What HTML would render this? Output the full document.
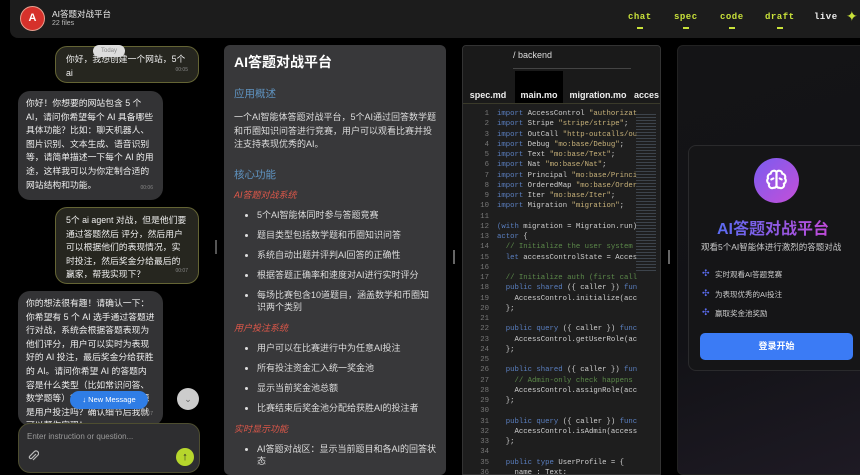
<!DOCTYPE html>
<html><head><meta charset="utf-8"><style>
*{box-sizing:border-box;margin:0;padding:0}
body{width:860px;height:469px;background:#000;overflow:hidden;position:relative;font-family:"Liberation Sans","Noto Sans CJK SC",sans-serif;color:#e8e8e8}
.abs{position:absolute}
.hdr{left:10px;top:0;width:860px;height:38px;background:#1c1c1c;border-radius:0 0 8px 8px}
.av{left:20px;top:6px;width:25px;height:25px;border-radius:50%;background:#d6312b;border:1px solid #e8a090;color:#fff;font-weight:bold;font-size:11px;text-align:center;line-height:23px}
.nav{top:12px;font-family:"Liberation Mono",monospace;font-size:9px;color:#c9e23a;font-weight:bold;letter-spacing:.5px}
.nav i{position:absolute;left:50%;top:15px;width:6px;height:2px;margin-left:-3px;background:#c9e23a}
.ub{background:#26261f;border:1px solid #646434;border-radius:12px;color:#eee;font-size:8.8px;line-height:13.6px;padding:6px 9px 6px 10px}
.ab{background:#333335;border-radius:12px;color:#eee;font-size:8.8px;line-height:13.6px;padding:6px 8px}
.ts{position:absolute;right:10px;bottom:4px;font-size:5px;color:#888}
.spec{left:224px;top:45px;width:222px;height:430px;background:#38383a;border-radius:6px;padding:8px 10px;overflow:hidden}
.spec h1{font-size:14px;color:#fff;margin-top:0;line-height:18px}
.spec h2{font-size:10.5px;color:#5f93c0;font-weight:normal;margin-top:15px}
.spec h3{font-size:9px;color:#e0584a;font-style:italic;font-weight:normal;margin-top:6px}
.spec p{font-size:9px;line-height:13.5px;margin-top:10px;color:#ddd}
.spec ul{list-style:none;margin-top:8px}
.spec li{font-size:9px;line-height:12px;padding-left:23px;position:relative;margin-bottom:8px;color:#ddd}
.spec li:before{content:"";position:absolute;left:11px;top:5px;width:3px;height:3px;border-radius:50%;background:#ddd}
.code{left:462px;top:45px;width:199px;height:430px;background:#1e1e1e;border:1px solid #333;border-radius:4px 4px 0 0;overflow:hidden}
.tabs{left:0;top:0;width:199px;height:57px;background:#1a1a1a}
.tab{top:25px;height:32px;font-size:9px;font-weight:bold;color:#eee;line-height:48px;text-align:center}
.ln{left:0;top:63px;width:26px;text-align:right;font-family:"Liberation Mono",monospace;font-size:7.3px;line-height:10.25px;color:#777}
.src{left:34px;top:63px;width:140px;font-family:"Liberation Mono",monospace;font-size:7.3px;line-height:10.25px;color:#cfcfcf;white-space:pre;overflow:hidden}
.k{color:#5a7fc0}.s{color:#c8b27a}.c{color:#5c8a4a}
.live{left:677px;top:45px;width:190px;height:430px;border-radius:6px;background:linear-gradient(160deg,#141416,#121216 60%,#1e1a24);border:1px solid #222}
.card{left:688px;top:145px;width:180px;height:226px;border-radius:8px;background:#151517;border:1px solid #2a2a2c}
.feat{font-size:7.5px;color:#ccc;left:715px}
.spk{left:702px;font-size:9px;color:#5b6cf0}
</style></head><body>
<div class="abs hdr"></div>
<div class="abs av">A</div>
<div class="abs" style="left:52px;top:8px;font-size:8.5px;color:#eee">AI答题对战平台</div>
<div class="abs" style="left:52px;top:20px;font-size:7px;color:#bbb">22 files</div>
<div class="abs nav" style="left:628px">chat<i></i></div>
<div class="abs nav" style="left:674px">spec<i></i></div>
<div class="abs nav" style="left:720px">code<i></i></div>
<div class="abs nav" style="left:765px">draft<i></i></div>
<div class="abs nav" style="left:814px;color:#eee">live</div>
<div class="abs" style="left:846px;top:8px;font-size:14px;color:#c9e23a">✦</div>

<!-- chat -->
<div class="abs ub" style="left:55px;top:46px;width:144px;height:37px">你好，我想创建一个网站，5个ai<span class="ts">00:05</span></div>
<div class="abs" style="left:93px;top:45px;width:32px;height:12px;border-radius:6px;background:#ddd;color:#888;font-size:6px;text-align:center;line-height:12px">Today</div>
<div class="abs ab" style="left:18px;top:91px;width:145px;height:109px">你好！你想要的网站包含 5 个 AI，请问你希望每个 AI 具备哪些具体功能？比如：聊天机器人、图片识别、文本生成、语音识别等，请简单描述一下每个 AI 的用途，这样我可以为你定制合适的网站结构和功能。<span class="ts">00:06</span></div>
<div class="abs ub" style="left:55px;top:207px;width:144px;height:77px">5个 ai agent 对战，但是他们要通过答题然后 评分，然后用户可以根据他们的表现情况，实时投注，然后奖金分给最后的赢家，帮我实现下？<span class="ts">00:07</span></div>
<div class="abs ab" style="left:18px;top:291px;width:145px;height:135px;overflow:hidden">你的想法很有趣！请确认一下：你希望有 5 个 AI 选手通过答题进行对战，系统会根据答题表现为他们评分，用户可以实时为表现好的 AI 投注，最后奖金分给获胜的 AI。请问你希望 AI 的答题内容是什么类型（比如常识问答、数学题等）？奖金池的资金来源是用户投注吗？确认细节后我就可以帮你实现！<span class="ts">00:07</span></div>
<div class="abs" style="left:70px;top:391px;width:78px;height:18px;border-radius:9px;background:#2f7de6;color:#fff;font-size:7.5px;text-align:center;line-height:18px">↓ New Message</div>
<div class="abs" style="left:177px;top:388px;width:22px;height:22px;border-radius:50%;background:#ccc;color:#666;font-size:9px;text-align:center;line-height:22px">⌄</div>
<div class="abs" style="left:18px;top:423px;width:182px;height:50px;border-radius:12px;background:#2e2e30;border:1px solid #4e4e30"></div>
<div class="abs" style="left:27px;top:432px;font-size:8px;color:#999">Enter instruction or question...</div>
<svg class="abs" style="left:27px;top:450px" width="12" height="12" viewBox="0 0 12 12"><path d="M9 4 L4.5 8.5 a1.5 1.5 0 0 1 -2 -2 L7.5 1.5 a2.5 2.5 0 0 1 3.5 3.5 L6 10" fill="none" stroke="#bbb" stroke-width="1.2"/></svg>
<div class="abs" style="left:176px;top:448px;width:18px;height:18px;border-radius:50%;background:#b6d62c;color:#222;font-size:11px;text-align:center;line-height:18px;font-weight:bold">↑</div>
<div class="abs" style="left:215px;top:240px;width:2px;height:14px;background:#555"></div>

<!-- spec -->
<div class="abs spec">
<h1>AI答题对战平台</h1>
<h2>应用概述</h2>
<p>一个AI智能体答题对战平台，5个AI通过回答数学题和币圈知识问答进行竞赛，用户可以观看比赛并投注支持表现优秀的AI。</p>
<h2>核心功能</h2>
<h3>AI答题对战系统</h3>
<ul><li>5个AI智能体同时参与答题竞赛</li><li>题目类型包括数学题和币圈知识问答</li><li>系统自动出题并评判AI回答的正确性</li><li>根据答题正确率和速度对AI进行实时评分</li><li>每场比赛包含10道题目，涵盖数学和币圈知识两个类别</li></ul>
<h3>用户投注系统</h3>
<ul><li>用户可以在比赛进行中为任意AI投注</li><li>所有投注资金汇入统一奖金池</li><li>显示当前奖金池总额</li><li>比赛结束后奖金池分配给获胜AI的投注者</li></ul>
<h3>实时显示功能</h3>
<ul><li>AI答题对战区：显示当前题目和各AI的回答状态</li></ul>
</div>
<div class="abs" style="left:453px;top:250px;width:2px;height:14px;background:#666"></div>

<!-- code -->
<div class="abs code">
<div class="abs tabs"></div>
<div class="abs" style="left:50px;top:4px;font-size:9px;color:#ddd">/ backend</div>
<div class="abs" style="left:50px;top:22px;width:118px;height:1px;background:#444"></div>
<div class="abs tab" style="left:0;width:50px">spec.md</div>
<div class="abs tab" style="left:52px;width:48px;background:#000">main.mo</div>
<div class="abs tab" style="left:101px;width:68px">migration.mo</div>
<div class="abs tab" style="left:171px;width:40px;text-align:left">acces</div>
<div class="abs" style="left:0;top:57px;width:199px;height:1px;background:#3a3a2a"></div>
<div class="abs ln">1<br>2<br>3<br>4<br>5<br>6<br>7<br>8<br>9<br>10<br>11<br>12<br>13<br>14<br>15<br>16<br>17<br>18<br>19<br>20<br>21<br>22<br>23<br>24<br>25<br>26<br>27<br>28<br>29<br>30<br>31<br>32<br>33<br>34<br>35<br>36</div>
<div class="abs src"><span class="k">import</span> AccessControl <span class="s">"authorization</span>
<span class="k">import</span> Stripe <span class="s">"stripe/stripe"</span>;
<span class="k">import</span> OutCall <span class="s">"http-outcalls/out</span>
<span class="k">import</span> Debug <span class="s">"mo:base/Debug"</span>;
<span class="k">import</span> Text <span class="s">"mo:base/Text"</span>;
<span class="k">import</span> Nat <span class="s">"mo:base/Nat"</span>;
<span class="k">import</span> Principal <span class="s">"mo:base/Princip</span>
<span class="k">import</span> OrderedMap <span class="s">"mo:base/Ordere</span>
<span class="k">import</span> Iter <span class="s">"mo:base/Iter"</span>;
<span class="k">import</span> Migration <span class="s">"migration"</span>;

<span class="k">(with</span> migration = Migration.run)
<span class="k">actor</span> {
  <span class="c">// Initialize the user system</span>
  <span class="k">let</span> accessControlState = Access
  
  <span class="c">// Initialize auth (first call</span>
  <span class="k">public shared</span> ({ caller }) <span class="k">func</span>
    AccessControl.initialize(acc
  };

  <span class="k">public query</span> ({ caller }) <span class="k">func</span>
    AccessControl.getUserRole(acc
  };

  <span class="k">public shared</span> ({ caller }) <span class="k">func</span>
    <span class="c">// Admin-only check happens</span>
    AccessControl.assignRole(acc
  };

  <span class="k">public query</span> ({ caller }) <span class="k">func</span>
    AccessControl.isAdmin(access
  };

  <span class="k">public type</span> UserProfile = {
    name : Text;</div>
<div class="abs" style="left:173px;top:66px;width:20px;height:160px;background:repeating-linear-gradient(#1e1e1e 0 2px,#4a5560 2px 3px);opacity:.7"></div>
</div>
<div class="abs" style="left:668px;top:250px;width:2px;height:14px;background:#666"></div>

<!-- live -->
<div class="abs live"></div>
<div class="abs card"></div>
<div class="abs" style="left:754px;top:158px;width:45px;height:45px;border-radius:50%;background:linear-gradient(135deg,#7a5cf0,#c44fd8)"></div>
<svg class="abs" style="left:764px;top:168px" width="25" height="25" viewBox="0 0 24 24" fill="none" stroke="#fff" stroke-width="2" stroke-linecap="round" stroke-linejoin="round"><path d="M12 4a3 3 0 0 0-5.5 1.5A3 3 0 0 0 4 10a3 3 0 0 0 1 5 3 3 0 0 0 4 4 3 3 0 0 0 3-1.5z"/><path d="M12 4a3 3 0 0 1 5.5 1.5A3 3 0 0 1 20 10a3 3 0 0 1-1 5 3 3 0 0 1-4 4 3 3 0 0 1-3-1.5z"/><path d="M12 4v14M9 10l-2 1M15 10l2 1"/></svg>
<div class="abs" style="left:717px;top:215px;font-size:16px;font-weight:bold;background:linear-gradient(90deg,#5a6cf2,#c04ad8);-webkit-background-clip:text;color:transparent">AI答题对战平台</div>
<div class="abs" style="left:701px;top:241px;font-size:8.5px;color:#ccc">观看5个AI智能体进行激烈的答题对战</div>
<div class="abs spk" style="top:268px">✣</div><div class="abs feat" style="top:269px">实时观看AI答题竞赛</div>
<div class="abs spk" style="top:288px">✣</div><div class="abs feat" style="top:289px">为表现优秀的AI投注</div>
<div class="abs spk" style="top:307px">✣</div><div class="abs feat" style="top:308px">赢取奖金池奖励</div>
<div class="abs" style="left:700px;top:333px;width:153px;height:27px;border-radius:5px;background:#3b7bf5;color:#fff;font-size:9px;font-weight:bold;text-align:center;line-height:27px">登录开始</div>
</body></html>
